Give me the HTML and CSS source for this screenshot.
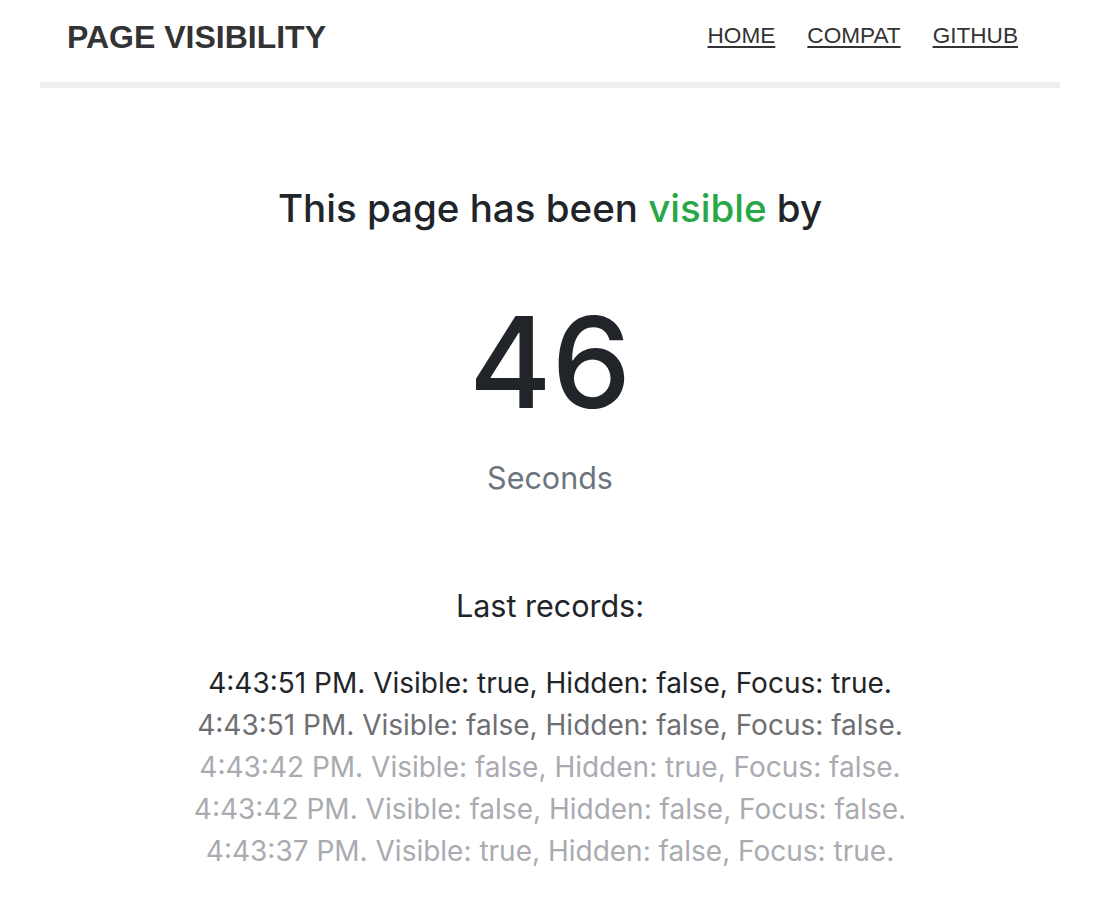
FILE: index.html
```html
<!DOCTYPE html>
<html>
<head>
<meta charset="utf-8">
<title>Page Visibility</title>
<link rel="stylesheet" href="styles.css">
</head>
<body>
<div class="container">
  <header class="header">
    <div class="brand">PAGE VISIBILITY</div>
    <nav class="nav">
      <a href="#">HOME</a>
      <a href="#">COMPAT</a>
      <a href="#">GITHUB</a>
    </nav>
  </header>
  <main class="main">
    <h1 class="lead">This page has been <span class="ok">visible</span> by</h1>
    <div class="count">46</div>
    <div class="unit">Seconds</div>
    <h2 class="records-title">Last records:</h2>
    <ul class="records">
      <li class="r1">4:43:51 PM. Visible: true, Hidden: false, Focus: true.</li>
      <li class="r2">4:43:51 PM. Visible: false, Hidden: false, Focus: false.</li>
      <li class="r3">4:43:42 PM. Visible: false, Hidden: true, Focus: false.</li>
      <li class="r3">4:43:42 PM. Visible: false, Hidden: false, Focus: false.</li>
      <li class="r3">4:43:37 PM. Visible: true, Hidden: false, Focus: true.</li>
    </ul>
  </main>
</div>
</body>
</html>
```
FILE: styles.css
```css
html, body {
  margin: 0;
  padding: 0;
  background: #fff;
}
body {
  font-family: "Liberation Sans", Arial, sans-serif;
  color: #212529;
}
.container {
  width: 1020px;
  margin: 0 auto;
}
.header {
  display: flex;
  justify-content: space-between;
  align-items: center;
  padding: 21px 42px 29px 27px;
  border-bottom: 6px solid #eeeeee;
}
.brand {
  font-size: 32px;
  line-height: 32px;
  font-weight: bold;
  color: #333;
}
.nav {
  display: flex;
  gap: 32px;
  padding-bottom: 3px;
}
.nav a {
  font-size: 22.6px;
  line-height: 22px;
  color: #333;
  text-decoration: underline;
  text-underline-offset: 3px;
}
.main {
  text-align: center;
}
.lead {
  margin: 96px 0 0;
  font-family: Inter, "Liberation Sans", sans-serif;
  font-size: 38.5px;
  line-height: 48px;
  font-weight: 500;
  color: #212529;
}
.ok {
  color: #28a745;
}
.count {
  margin-top: 66px;
  font-family: Inter, "Liberation Sans", sans-serif;
  font-size: 126px;
  line-height: 128px;
  font-weight: 500;
  color: #212529;
}
.unit {
  margin-top: 34px;
  font-family: Inter, "Liberation Sans", sans-serif;
  font-size: 30.5px;
  line-height: 36px;
  color: #6c757d;
}
.records-title {
  margin: 92px 0 0;
  font-family: Inter, "Liberation Sans", sans-serif;
  font-size: 30.5px;
  line-height: 36px;
  font-weight: normal;
  color: #212529;
}
.records {
  list-style: none;
  margin: 38px 0 0;
  padding: 0;
  font-family: Inter, "Liberation Sans", sans-serif;
  font-size: 28px;
  line-height: 42px;
}
.r1 { color: #212529; }
.r2 { color: #6e6f73; }
.r3 { color: #a9abb1; }
```
